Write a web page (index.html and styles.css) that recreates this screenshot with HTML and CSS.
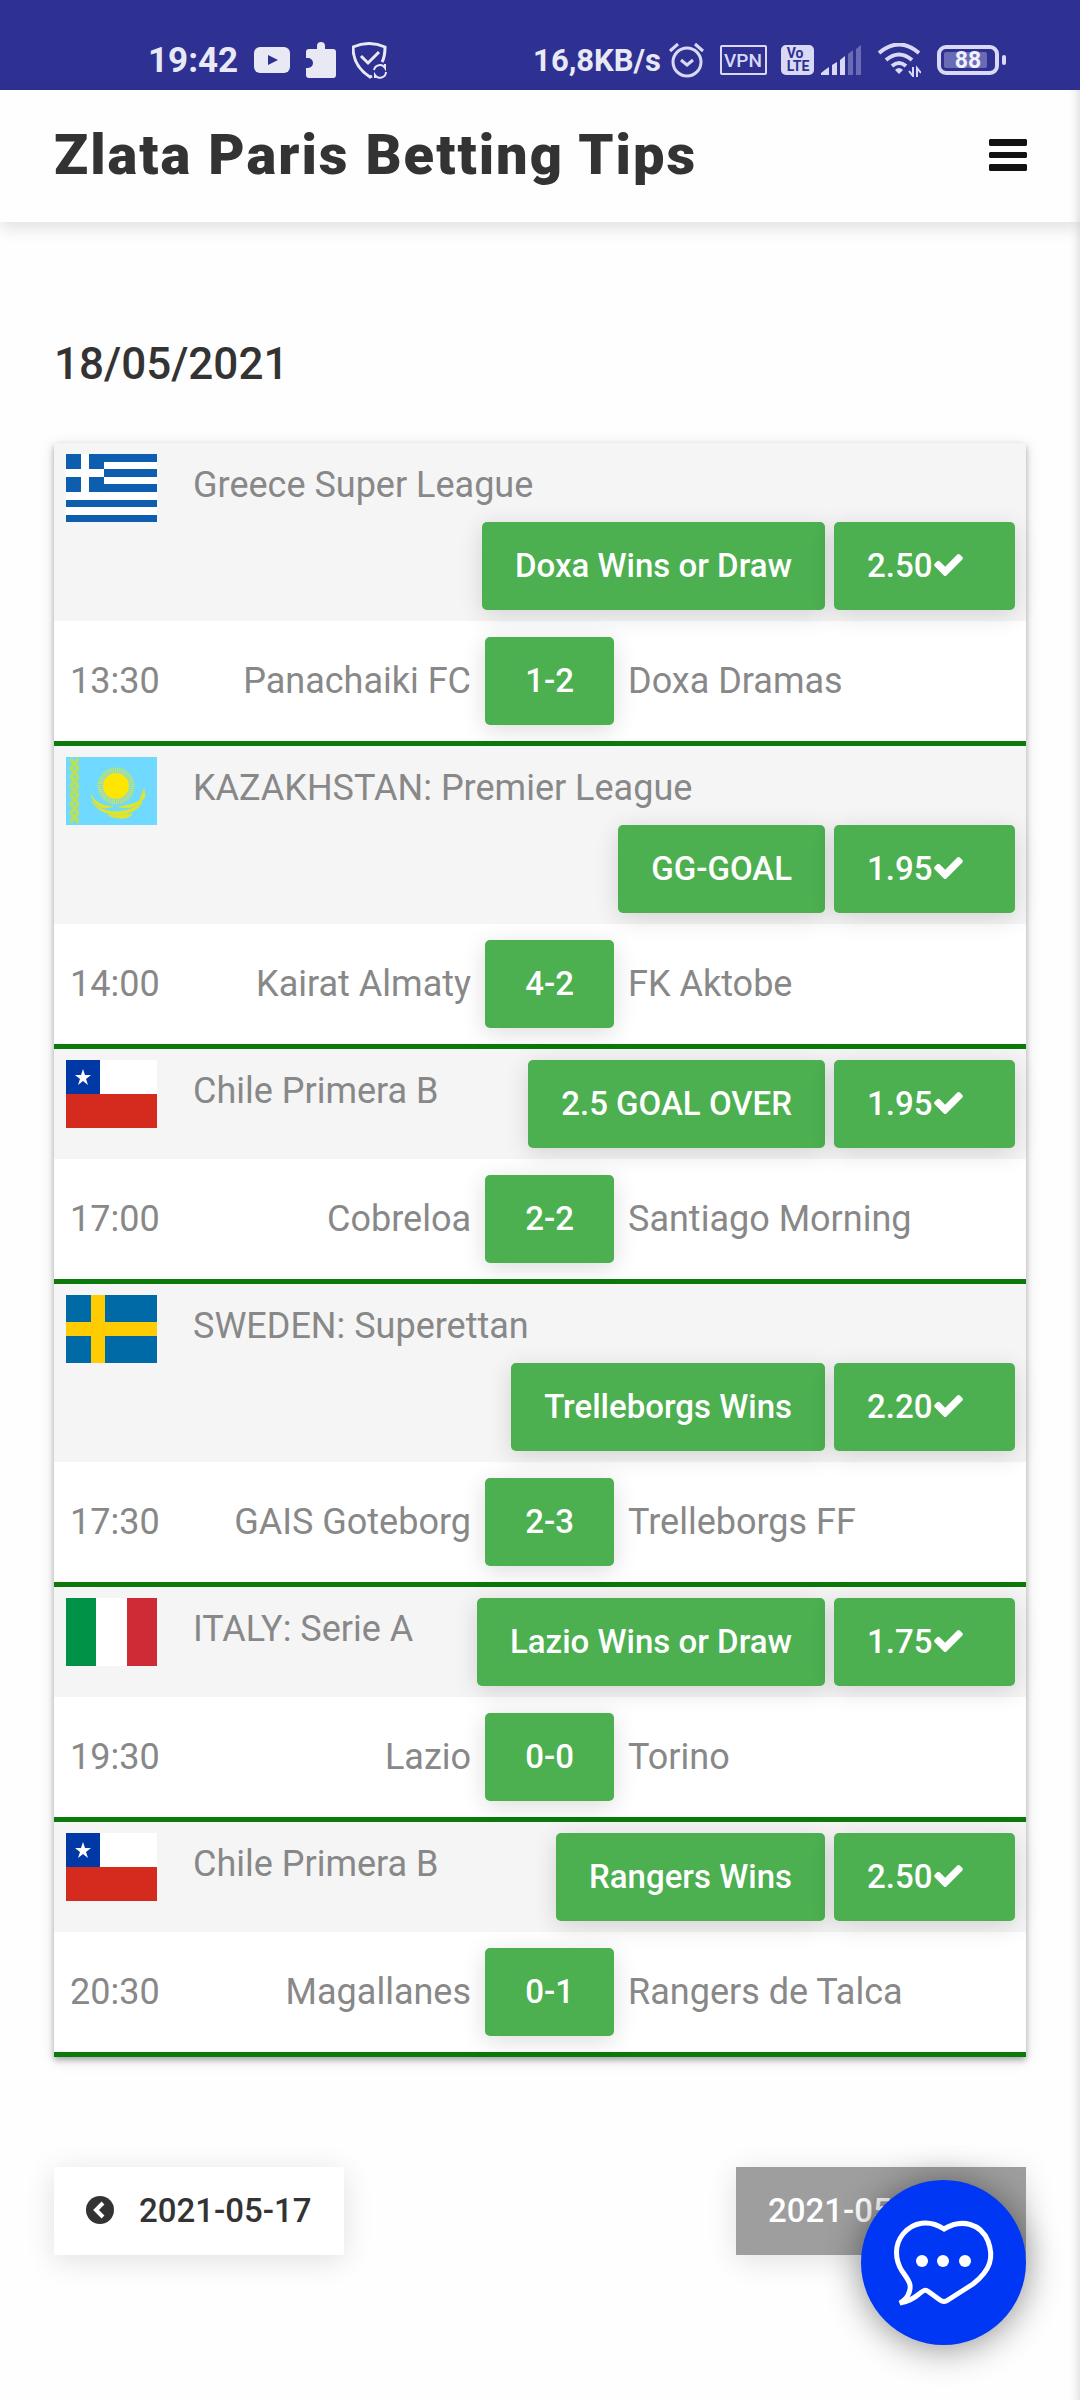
FILE: index.html
```html
<!DOCTYPE html>
<html lang="en">
<head>
    <meta charset="UTF-8" />
    <meta name="viewport" content="width=device-width, initial-scale=1.0" />
    <title>Zlata Paris Betting Tips</title>
    <link rel="stylesheet" href="styles.css">
</head>
<body>

<!-- Flags and shared icons -->
<svg class="sprite" aria-hidden="true">
    <symbol id="flag-greece" viewBox="0 0 91 68">
        <rect width="91" height="68" fill="#fff" />
        <path fill="#0d5eaf" d="M0 0h91v8H0zM38 15h53v8H38zM38 30h53v8H38zM0 46h91v7H0zM0 61h91v7H0z" />
        <path fill="#0d5eaf" d="M0 0h38v38H0z" />
        <path fill="#fff" d="M15 0h8v38h-8zM0 15h38v8H0z" />
    </symbol>
    <symbol id="flag-kazakhstan" viewBox="0 0 91 68">
        <rect width="91" height="68" fill="#6fd9ff" />
        <path d="M5 0v68M12 0v68" stroke="#b9e05a" stroke-width="1" stroke-dasharray="3 1" />
        <path d="M5 2l7 9l-7 9l7 9l-7 9l7 9l-7 9l7 9M12 2l-7 9l7 9l-7 9l7 9l-7 9l7 9l-7 9" fill="none" stroke="#b9e05a" stroke-width="3" />
        <circle cx="50" cy="29" r="16" fill="none" stroke="#dbe53a" stroke-width="5" stroke-dasharray="1 1" />
        <circle cx="50" cy="29" r="13" fill="#ffe600" />
        <path fill="#dfe52c" stroke="#dfe52c" d="M25 38c6 10 16 12 22 11c-9 4-17 2-22-11zM75 38c2 9-14 10-22 12c9 2 27-1 22-12zM26 44c6 9 16 10 24 11c8-1 18-2 26-10c-4 10-16 11-22 13c-12-1-22-3-28-14zM42 58q10 1 24-1q-4 5-12 4q-7 0-12-3zM78 32l1 8l-5 5z" />
    </symbol>
    <symbol id="flag-chile" viewBox="0 0 91 68">
        <rect width="91" height="34" fill="#fff" />
        <rect y="34" width="91" height="34" fill="#d52b1e" />
        <rect width="34" height="34" fill="#0039a6" />
        <path fill="#fff" d="M17 9l2 6h6l-5 4l2 6l-5-4l-5 4l2-6l-5-4h6z" />
    </symbol>
    <symbol id="flag-sweden" viewBox="0 0 91 68">
        <rect width="91" height="68" fill="#006aa7" />
        <path fill="#fecc00" d="M25 0h14v68H25zM0 27h91v14H0z" />
    </symbol>
    <symbol id="flag-italy" viewBox="0 0 91 68">
        <rect width="91" height="68" fill="#fff" />
        <rect width="30" height="68" fill="#009246" />
        <rect x="61" width="30" height="68" fill="#ce2b37" />
    </symbol>
    <symbol id="icon-check" viewBox="121 334 1550 1188">
        <path fill="currentColor" d="M1671 566q0 40-28 68l-724 724-136 136q-28 28-68 28t-68-28l-136-136-362-362q-28-28-28-68t28-68l136-136q28-28 68-28t68 28l294 295 656-657q28-28 68-28t68 28l136 136q28 28 28 68z" />
    </symbol>
    <symbol id="icon-chevron" viewBox="0 0 28 28">
        <circle cx="14" cy="14" r="14" fill="currentColor" />
        <path d="M17 7l-7 7l7 7" fill="none" stroke="#fff" stroke-width="4" />
    </symbol>
</svg>

<div class="status-bar">
    <div class="status-left">
        <span class="clock">19:42</span>
        <svg width="36" height="26" viewBox="0 0 36 26">
            <rect width="36" height="26" rx="6" fill="#e9e9f6" />
            <path d="M14 8l10 5l-10 5z" fill="#2e3192" />
        </svg>
        <svg width="30" height="36" viewBox="0 0 30 36">
            <path fill="#e9e9f6" d="M3 7h8V4a4 4 0 0 1 8 0v3h8a3 3 0 0 1 3 3v23a3 3 0 0 1-3 3H3a3 3 0 0 1-3-3v-7h2a5 5 0 0 0 0-10H0v-6a3 3 0 0 1 3-3z" />
        </svg>
        <svg width="35" height="37" viewBox="0 0 35 37" fill="none" stroke="#e9e9f6" stroke-width="3">
            <path d="M20 34l-2 1C10 30 1 21 1 5Q17-2 33 5q0 10-3 15" />
            <path d="M9 14l7 7L27 10" />
            <path stroke-width="2" d="M22 28a6 6 0 0 1 11-2v-4M34 30a6 6 0 0 1-11 3v3" />
        </svg>
    </div>
    <div class="status-right">
        <span class="speed">16,8KB/s</span>
        <svg class="alarm" width="35" height="36" viewBox="0 0 35 36" fill="none" stroke="#d9d9f5" stroke-width="3">
            <circle cx="18" cy="20" r="14" />
            <path d="M12 18l6 5l6-5M1 9l8-7M34 9l-8-7" />
        </svg>
        <svg class="vpn" width="47" height="31" viewBox="0 0 47 31">
            <rect x="1" y="1" width="45" height="28" rx="1" fill="none" stroke="#d9d9f5" stroke-width="2" />
            <text x="23" y="22" class="icon-text" font-size="19" fill="#d9d9f5">VPN</text>
        </svg>
        <svg class="volte" width="33" height="30" viewBox="0 0 33 30">
            <rect width="33" height="30" rx="5" fill="#d9d9f5" />
            <text x="14" y="13" class="icon-text bold" font-size="14" fill="#2e3192">Vo</text>
            <text x="17" y="26" class="icon-text bold" font-size="14" fill="#2e3192">LTE</text>
        </svg>
        <svg class="signal" width="41" height="30" viewBox="0 0 41 30" fill="#d9d9f5">
            <path d="M0 28q5-4 8-6v8H0zM11 20l5-3v13h-5zM19 15l5-4v19h-5z" />
            <path opacity=".35" d="M27 9l5-4v25h-5zM35 4l5-4v30h-5z" />
        </svg>
        <svg class="wifi" width="43" height="34" viewBox="0 0 43 34" fill="none" stroke="#d9d9f5" stroke-width="4">
            <path d="M1 10q20-17 40 0M8 17q13-11 26 0M14 23q7-6 14 0" />
            <path fill="#d9d9f5" stroke="none" d="M17 27q4-4 8 0l-4 4z" />
            <path stroke-width="2" d="M35 24v9l-4-5M39 34v-9l4 5" />
        </svg>
        <svg class="battery" width="69" height="31" viewBox="0 0 69 31">
            <rect x="2" y="2" width="58" height="26" rx="7" fill="none" stroke="#d9d9f5" stroke-width="4" />
            <rect x="7" y="7" width="43" height="16" rx="2" fill="#d9d9f5" opacity=".35" />
            <rect x="65" y="10" width="4" height="10" rx="2" fill="#d9d9f5" />
            <text x="31" y="23" class="icon-text bold" font-size="23" fill="#f0f0ff">88</text>
        </svg>
    </div>
</div>

<div class="page">
    <header class="top-header">
        <h1>Zlata Paris Betting Tips</h1>
        <button class="menu-btn" type="button" aria-label="Menu">
            <svg width="38" height="32" viewBox="0 0 38 32">
                <path fill="#111" d="M1 0h36l1 1v5l-1 1H1L0 6V1zM1 13h36l1 1v4l-1 1H1l-1-1v-4zM1 25h36l1 1v5l-1 1H1l-1-1v-5z" />
            </svg>
        </button>
    </header>

    <main>
        <h2>18/05/2021</h2>

        <table class="tips">
            <colgroup>
                <col class="col-time">
                <col class="col-home">
                <col class="col-score">
                <col>
            </colgroup>
            <tbody>
                <tr class="league">
                    <td colspan="4">
                        <div class="league-bar">
                            <svg class="flag" role="img" aria-label="Greece"><use href="#flag-greece" /></svg>
                            <span class="league-name">Greece Super League</span>
                            <div class="bet">
                                <button class="btn" type="button">Doxa Wins or Draw</button>
                                <button class="btn odds" type="button">2.50<svg class="check"><use href="#icon-check" /></svg></button>
                            </div>
                        </div>
                    </td>
                </tr>
                <tr class="match">
                    <td class="time">13:30</td>
                    <td class="home">Panachaiki FC</td>
                    <td><button class="btn score" type="button">1-2</button></td>
                    <td class="away">Doxa Dramas</td>
                </tr>

                <tr class="league">
                    <td colspan="4">
                        <div class="league-bar">
                            <svg class="flag" role="img" aria-label="Kazakhstan"><use href="#flag-kazakhstan" /></svg>
                            <span class="league-name">KAZAKHSTAN: Premier League</span>
                            <div class="bet">
                                <button class="btn" type="button">GG-GOAL</button>
                                <button class="btn odds" type="button">1.95<svg class="check"><use href="#icon-check" /></svg></button>
                            </div>
                        </div>
                    </td>
                </tr>
                <tr class="match">
                    <td class="time">14:00</td>
                    <td class="home">Kairat Almaty</td>
                    <td><button class="btn score" type="button">4-2</button></td>
                    <td class="away">FK Aktobe</td>
                </tr>

                <tr class="league">
                    <td colspan="4">
                        <div class="league-bar">
                            <svg class="flag" role="img" aria-label="Chile"><use href="#flag-chile" /></svg>
                            <span class="league-name">Chile Primera B</span>
                            <div class="bet">
                                <button class="btn" type="button">2.5 GOAL OVER</button>
                                <button class="btn odds" type="button">1.95<svg class="check"><use href="#icon-check" /></svg></button>
                            </div>
                        </div>
                    </td>
                </tr>
                <tr class="match">
                    <td class="time">17:00</td>
                    <td class="home">Cobreloa</td>
                    <td><button class="btn score" type="button">2-2</button></td>
                    <td class="away">Santiago Morning</td>
                </tr>

                <tr class="league">
                    <td colspan="4">
                        <div class="league-bar">
                            <svg class="flag" role="img" aria-label="Sweden"><use href="#flag-sweden" /></svg>
                            <span class="league-name">SWEDEN: Superettan</span>
                            <div class="bet">
                                <button class="btn" type="button">Trelleborgs Wins</button>
                                <button class="btn odds" type="button">2.20<svg class="check"><use href="#icon-check" /></svg></button>
                            </div>
                        </div>
                    </td>
                </tr>
                <tr class="match">
                    <td class="time">17:30</td>
                    <td class="home">GAIS Goteborg</td>
                    <td><button class="btn score" type="button">2-3</button></td>
                    <td class="away">Trelleborgs FF</td>
                </tr>

                <tr class="league">
                    <td colspan="4">
                        <div class="league-bar">
                            <svg class="flag" role="img" aria-label="Italy"><use href="#flag-italy" /></svg>
                            <span class="league-name">ITALY: Serie A</span>
                            <div class="bet">
                                <button class="btn" type="button">Lazio Wins or Draw</button>
                                <button class="btn odds" type="button">1.75<svg class="check"><use href="#icon-check" /></svg></button>
                            </div>
                        </div>
                    </td>
                </tr>
                <tr class="match">
                    <td class="time">19:30</td>
                    <td class="home">Lazio</td>
                    <td><button class="btn score" type="button">0-0</button></td>
                    <td class="away">Torino</td>
                </tr>

                <tr class="league">
                    <td colspan="4">
                        <div class="league-bar">
                            <svg class="flag" role="img" aria-label="Chile"><use href="#flag-chile" /></svg>
                            <span class="league-name">Chile Primera B</span>
                            <div class="bet">
                                <button class="btn" type="button">Rangers Wins</button>
                                <button class="btn odds" type="button">2.50<svg class="check"><use href="#icon-check" /></svg></button>
                            </div>
                        </div>
                    </td>
                </tr>
                <tr class="match">
                    <td class="time">20:30</td>
                    <td class="home">Magallanes</td>
                    <td><button class="btn score" type="button">0-1</button></td>
                    <td class="away">Rangers de Talca</td>
                </tr>
            </tbody>
        </table>

        <nav class="days">
            <a class="day-link" href="#"><svg class="chevron"><use href="#icon-chevron" /></svg>2021-05-17</a>
            <a class="day-link next" href="#">2021-05-19</a>
        </nav>
    </main>
</div>

<button class="chat-btn" type="button" aria-label="Chat">
    <svg viewBox="0 0 165 165">
        <path d="M83 49C68 39 52 42 42 54C33 65 34 80 41 91C48 101 52 105 47 115Q45 119 39 123Q50 121 58 114C63 110 64 109 68 112L79 120Q83 123 87 120L112 104C130 90 133 77 127 61C120 44 101 38 83 49z" fill="none" stroke="#fff" stroke-width="5" />
        <circle cx="61" cy="81" r="6" fill="#fff" />
        <circle cx="82" cy="81" r="6" fill="#fff" />
        <circle cx="104" cy="81" r="6" fill="#fff" />
    </svg>
</button>

</body>
</html>
```
FILE: styles.css
```css
* {
    box-sizing: border-box;
}
body {
    margin: 0;
    min-height: 100vh;
    display: flex;
    flex-direction: column;
    font-family: Roboto, Arial, sans-serif;
    font-size: 36px;
    color: #333;
    background-color: #fefefe;
}
button {
    font-family: inherit;
    border: none;
    cursor: pointer;
}
.sprite {
    position: absolute;
    width: 0;
    height: 0;
}

/* status bar */
.status-bar {
    display: flex;
    justify-content: space-between;
    height: 90px;
    padding: 32px 74px 0 148px;
    background-color: #2e3192;
    color: #e9e9f6;
    font-weight: 700;
}
.status-left, .status-right {
    display: flex;
    align-items: center;
    height: 56px;
}
.status-left {
    gap: 16px;
}
.clock {
    font-size: 35px;
}
.speed {
    font-size: 31px;
    margin-right: 8px;
}
.vpn {
    margin-left: 16px;
}
.volte {
    margin-left: 14px;
}
.signal {
    margin-left: 7px;
}
.wifi {
    margin-left: 16px;
}
.battery {
    margin-left: 16px;
}
.icon-text {
    font-family: Roboto, Arial, sans-serif;
    font-weight: 500;
    text-anchor: middle;
}
.bold {
    font-weight: 700;
}

/* header */
.page {
    flex: 1;
    box-shadow: inset -10px 0 10px -8px rgba(0, 0, 0, 0.15);
}
.top-header {
    display: flex;
    justify-content: space-between;
    align-items: center;
    height: 132px;
    padding: 0 53px 2px 54px;
    box-shadow: 0 6px 16px rgba(0, 0, 0, 0.12);
}
h1 {
    margin: 0;
    font-size: 56px;
    font-weight: 900;
    letter-spacing: 2px;
}
.menu-btn {
    display: flex;
    padding: 0;
    background: none;
}
main {
    padding: 112px 54px 54px;
}
h2 {
    margin: 0 0 49px;
    font-size: 44px;
    font-weight: 500;
    line-height: 60px;
}

/* tips table */
.tips {
    width: 100%;
    table-layout: fixed;
    border-spacing: 0;
    background-color: #fff;
    color: #888;
    box-shadow: 0 3px 6px rgba(0, 0, 0, 0.3), 0 3px 16px rgba(0, 0, 0, 0.1);
}
.tips td {
    padding: 0;
}
.col-time {
    width: 120px;
}
.col-home {
    width: 32%;
}
.col-score {
    width: 129px;
}
.league {
    background-color: #f5f5f5;
}
.league-bar {
    display: flex;
    flex-wrap: wrap;
    align-items: flex-start;
    padding: 11px 11px 11px 12px;
}
.flag {
    width: 91px;
    height: 68px;
    margin-right: 36px;
}
.league-name {
    line-height: 62px;
}
.bet {
    display: flex;
    gap: 9px;
    margin-left: auto;
}
.btn {
    height: 88px;
    padding: 0 33px 2px;
    border-radius: 5px;
    background-color: #4caf50;
    color: #fff;
    font-size: 33px;
    font-weight: 500;
    box-shadow: 0 5px 24px rgba(0, 0, 0, 0.14);
}
.odds {
    display: flex;
    align-items: center;
    width: 181px;
}
.check {
    width: 29px;
    height: 22px;
    margin-left: 2px;
}
.tips .match td {
    height: 125px;
    border-bottom: 5px solid #0b7a0b;
}
.tips .time {
    padding-left: 16px;
}
.tips .home {
    padding-right: 14px;
    text-align: right;
}
.tips .away {
    padding-left: 14px;
}
.score {
    display: block;
    width: 100%;
}

/* previous / next day */
.days {
    display: flex;
    justify-content: space-between;
    margin-top: 110px;
}
.day-link {
    display: flex;
    align-items: center;
    min-width: 290px;
    height: 88px;
    padding: 0 32px 2px;
    background-color: #fff;
    color: #333;
    font-size: 33px;
    font-weight: 500;
    text-decoration: none;
    white-space: nowrap;
    box-shadow: 0 5px 28px rgba(0, 0, 0, 0.12);
}
.chevron {
    width: 28px;
    height: 28px;
    margin-right: 25px;
}
.next {
    background-color: #9e9e9e;
    color: #fff;
}

/* chat bubble over the page */
.chat-btn {
    position: fixed;
    right: 54px;
    bottom: 55px;
    width: 165px;
    height: 165px;
    padding: 0;
    border-radius: 50%;
    background-color: #0037f5;
    box-shadow: 0 3px 36px rgba(0, 0, 0, 0.45);
}
.chat-btn svg {
    display: block;
}
```
